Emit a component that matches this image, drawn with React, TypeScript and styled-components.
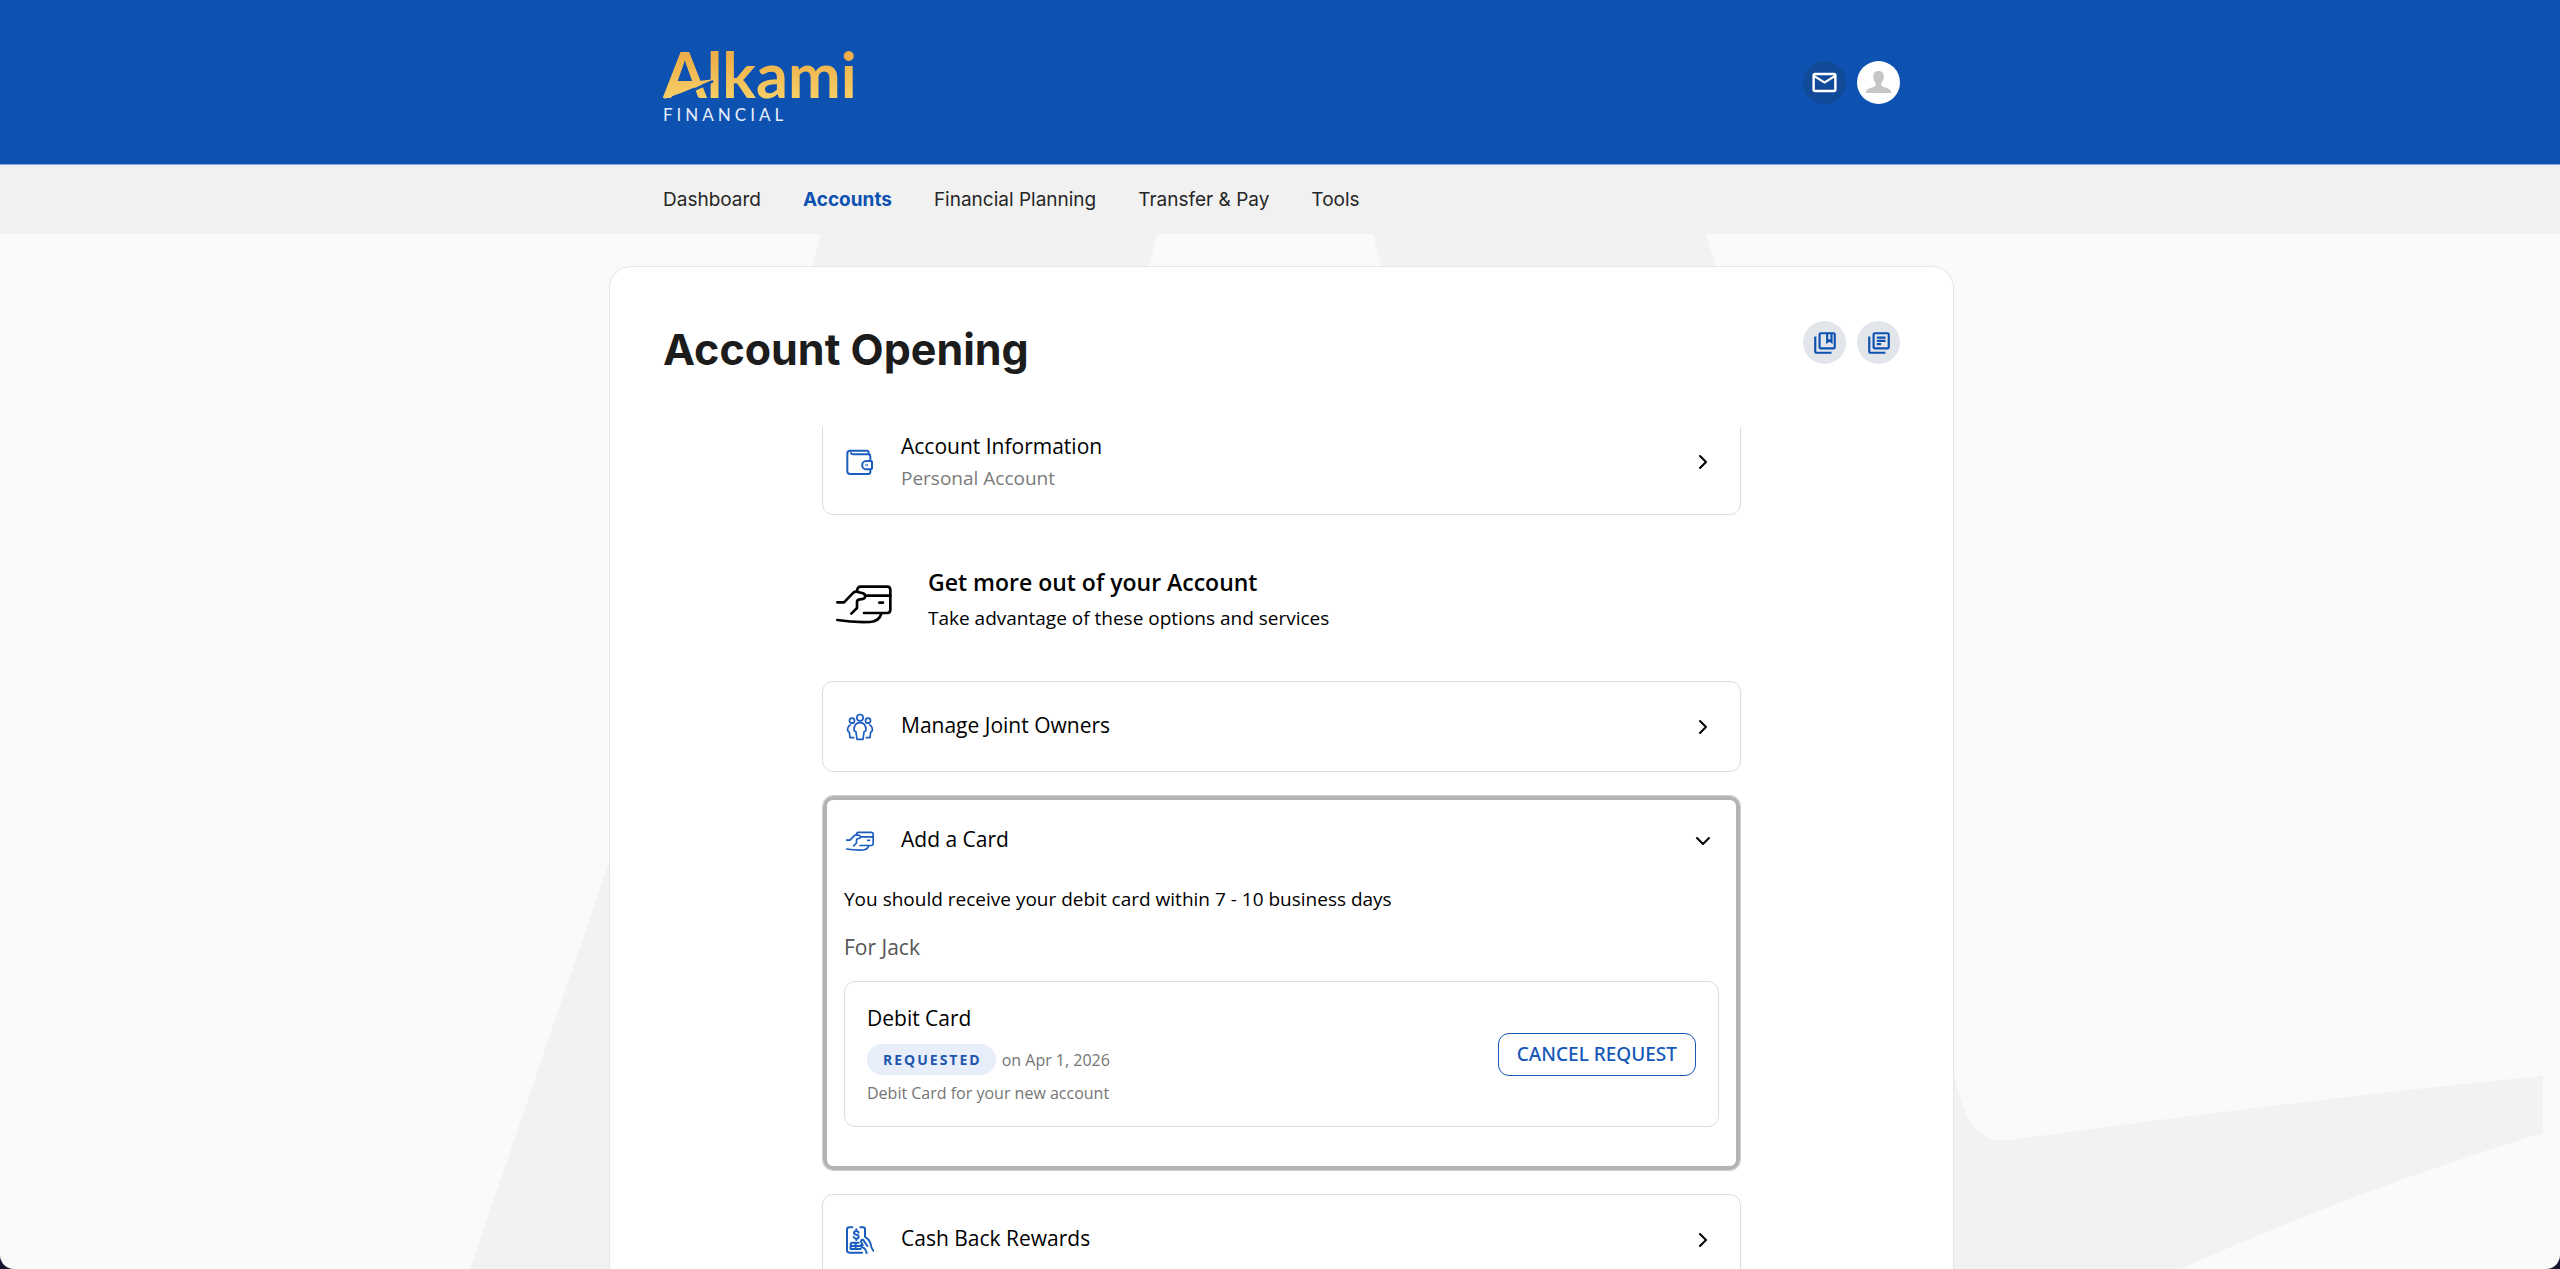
import React from 'react';
import styled, { createGlobalStyle, css } from 'styled-components';
import { MdMailOutline, MdOutlineCollectionsBookmark, MdOutlineLibraryBooks } from 'react-icons/md';
import { FiChevronDown, FiChevronRight } from 'react-icons/fi';

const blue = '#0d52b1';
const bodyFont = "'Open Sans', 'Noto Sans', sans-serif";
const uiFont = "Inter, 'Liberation Sans', sans-serif";

const GlobalStyle = createGlobalStyle`
  *, *::before, *::after { box-sizing: border-box; }
  html { background: #1a1433; }
  body { margin: 0; font-family: ${bodyFont}; color: #000; }
  h1, h2, h3, p { margin: 0; }
  button { font: inherit; color: inherit; cursor: pointer; }
`;

const Page = styled.div`
  position: relative;
  display: flex;
  flex-direction: column;
  height: 100vh;
  overflow: hidden;
  background: #fafafa;
  border-radius: 0 0 14px 14px;
`;

const TopBar = styled.header`
  flex: none;
  padding-left: 3px;
  background: ${blue};
  border-bottom: 1px solid #86a8d8;
`;

const Container = styled.div`
  display: flex;
  align-items: center;
  width: 100%;
  max-width: 1345px;
  margin: 0 auto;
  padding: 0 54px;
`;

const TopBarInner = styled(Container)`
  justify-content: space-between;
  height: 164px;
`;

const LogoLink = styled.a`
  display: block;
  line-height: 0;
`;

const Actions = styled.div`
  display: flex;
  gap: 11px;
`;

const RoundButton = styled.button<{ $bg: string; $fg: string }>`
  display: flex;
  align-items: center;
  justify-content: center;
  width: 43px;
  height: 43px;
  padding: 0;
  border: 0;
  border-radius: 50%;
  background: ${(p) => p.$bg};
  color: ${(p) => p.$fg};
`;

const NavBar = styled.nav`
  position: relative;
  flex: none;
  padding-left: 3px;
  background: #f1f1f1;
`;

const NavInner = styled(Container)`
  gap: 42px;
  height: 69px;
`;

const NavLink = styled.a<{ $active?: boolean }>`
  font: 400 19px/28px ${uiFont};
  color: #262626;
  text-decoration: none;
  ${(p) =>
    p.$active &&
    css`
      font-weight: 700;
      color: ${blue};
    `}
`;

const Main = styled.main`
  position: relative;
  display: flex;
  flex: 1;
  min-height: 0;
  padding: 32px 0 0 3px;
`;

const Watermark = styled.svg`
  position: absolute;
  inset: 0;
  width: 100%;
  height: 100%;
`;

const Sheet = styled.section`
  position: relative;
  display: flex;
  flex-direction: column;
  width: 100%;
  max-width: 1345px;
  margin: 0 auto;
  padding: 54px 53px 0;
  background: #fff;
  border: 1px solid #e6e6e6;
  border-bottom: 0;
  border-radius: 22px 22px 0 0;
`;

const SheetHead = styled.div`
  display: flex;
  align-items: flex-start;
  justify-content: space-between;
  margin-bottom: 50px;
`;

const PageTitle = styled.h1`
  font: 700 43px/56px ${uiFont};
  color: #1c1c1c;
`;

const ScrollArea = styled.div`
  flex: 1;
  min-height: 0;
  overflow-y: auto;
  scrollbar-width: none;
`;

const List = styled.div`
  display: flex;
  flex-direction: column;
  max-width: 919px;
  margin: -18px auto 0;
`;

const Panel = styled.section<{ $focused?: boolean }>`
  border: 1px solid #dcdde3;
  border-radius: 11px;
  & + & {
    margin-top: 23px;
  }
  ${(p) =>
    p.$focused &&
    css`
      border-color: #cfcfcf;
      box-shadow: inset 0 0 0 4px #b3b3b3;
    `}
`;

const PanelHead = styled.button`
  display: flex;
  align-items: center;
  width: 100%;
  min-height: 89px;
  padding: 20px 25px 20px 23px;
  border: 0;
  background: none;
  text-align: left;
`;

const IconSlot = styled.span`
  display: flex;
  flex: none;
  align-items: center;
  justify-content: center;
  width: 28px;
  height: 28px;
  margin-right: 27px;
  color: #1a5dbf;
`;

const PanelText = styled.span<{ $single: boolean }>`
  display: flex;
  flex: 1;
  flex-direction: column;
  padding-bottom: ${(p) => (p.$single ? 4 : 0)}px;
  line-height: 32px;
`;

const PanelTitle = styled.span`
  font-size: 21px;
`;

const PanelSub = styled.span`
  font-size: 19px;
  color: #7b7b7b;
`;

const PanelBody = styled.div`
  display: flex;
  flex-direction: column;
  gap: 20px;
  padding: 0 21px 43px;
`;

const Promo = styled.div`
  display: flex;
  align-items: center;
  gap: 36px;
  padding: 51px 14px 39px;
`;

const PromoText = styled.div`
  display: flex;
  flex-direction: column;
  gap: 6px;
  padding-bottom: 10px;
`;

const PromoTitle = styled.h2`
  font-size: 23px;
  font-weight: 600;
  line-height: 32px;
`;

const BodyText = styled.p`
  font-size: 19px;
  line-height: 28px;
`;

const OwnerName = styled.h3`
  font-size: 21px;
  font-weight: 400;
  line-height: 28px;
  color: #555;
`;

const CardRequest = styled.div`
  display: flex;
  align-items: center;
  justify-content: space-between;
  padding: 21px 22px;
  border: 1px solid #dcdde3;
  border-radius: 11px;
`;

const CardTitle = styled.h3`
  font-size: 21px;
  font-weight: 400;
  line-height: 30px;
`;

const StatusLine = styled.p`
  display: flex;
  align-items: center;
  gap: 6px;
  margin: 11px 0 6px;
  font-size: 16px;
  line-height: 24px;
  color: #757575;
`;

const Badge = styled.span`
  padding: 0 14px 0 16px;
  border-radius: 16px;
  background: #e8eefa;
  font-size: 14px;
  font-weight: 700;
  line-height: 31px;
  letter-spacing: 2px;
  color: #2056ab;
`;

const CardNote = styled.p`
  font-size: 16px;
  line-height: 24px;
  color: #757575;
`;

const CancelButton = styled.button`
  height: 43px;
  padding: 0 18px;
  border: 1px solid #1558b8;
  border-radius: 11px;
  background: #fff;
  font-family: 'Noto Sans', 'Open Sans', sans-serif;
  font-size: 19px;
  font-weight: 500;
  color: #1558b8;
`;

const Logo = () => (
  <svg width="194" height="88" viewBox="0 0 194 88" role="img" aria-label="Alkami Financial">
    <defs>
      <linearGradient id="gold" gradientUnits="userSpaceOnUse" x1="0" y1="18" x2="0" y2="60">
        <stop offset="0" stopColor="#eeae49" />
        <stop offset="1" stopColor="#f7cf66" />
      </linearGradient>
    </defs>
    <text x="0" y="60" fill="url(#gold)" fontFamily="Lato, sans-serif" fontWeight="700" fontSize="63">
      Alkami
    </text>
    <path d="M50 43L20 57" stroke={blue} strokeWidth="3" />
    <path d="M1 61L12 46L52 41L18 55Z" fill="url(#gold)" />
    <text x="0" y="83" fill="#e6eefa" fontFamily="Lato, sans-serif" fontSize="17" letterSpacing="4">
      FINANCIAL
    </text>
  </svg>
);

const Avatar = () => (
  <svg width="27" height="24" viewBox="0 0 27 24" fill="#c6c6c6" aria-hidden="true">
    <path d="M13.500 1C17 1 19 3.200 18.800 7C18.600 10 17.400 12 16.200 13.600C15.800 15.200 16.600 16.300 18.600 17C23 18.400 26 19 26.200 23H.8C1 19 4 18.400 8.400 17C10.400 16.300 11.200 15.200 10.800 13.600C9.600 12 8.400 10 8.200 7C8 3.200 10 1 13.500 1Z" />
  </svg>
);

const HandCardIcon = ({ width, stroke }: { width: number; stroke: number }) => (
  <svg
    width={width}
    viewBox="48 72 168 120"
    fill="none"
    stroke="currentColor"
    strokeWidth={stroke}
    strokeLinecap="round"
    strokeLinejoin="round"
    aria-hidden="true"
  >
    <path d="M52 127H72L101 97Q105 94 110 95L129 100Q138 104 135 112Q132 118 119 118Q111 119 111 126V144L94 161" />
    <path d="M111 94Q112 80 122 80H202Q211 80 211 90V149Q211 158 202 159H132" />
    <path d="M136 107H211M178 128H189" />
    <path d="M52 180Q100 188 150 186Q178 184 184 161" />
  </svg>
);

const WalletIcon = () => (
  <svg width="28" height="28" viewBox="30 24 84 84" fill="none" stroke="currentColor" strokeWidth="6" strokeLinecap="round" strokeLinejoin="round" aria-hidden="true">
    <path d="M103 92V96Q103 102 96 102H42Q34 102 34 94V40Q34 32 42 32H92Q98 32 98 38V42Q103 44 103 50V60" />
    <path d="M98 43H52Q46 43 45 39" />
    <path d="M103 63H91A12 12 0 0 0 91 88H103Q108 88 108 84V67Q108 63 103 63Z" />
    <circle cx="92" cy="75" r="1" />
  </svg>
);

const PeopleIcon = () => (
  <svg width="28" height="28" viewBox="48 69 84 84" fill="none" stroke="currentColor" strokeWidth="5" strokeLinecap="round" strokeLinejoin="round" aria-hidden="true">
    <circle cx="90" cy="83" r="9.500" />
    <circle cx="66" cy="92" r="7.500" />
    <circle cx="114" cy="92" r="7.500" />
    <path d="M81 148H99L102 126L108 121Q108 98 90 98Q72 98 72 121L78 126Z" />
    <path d="M61 105Q52 109 53 122L58 127L60 143H71" />
    <path d="M119 105Q128 109 127 122L122 127L120 143H109" />
  </svg>
);

const CashBackIcon = () => (
  <svg width="28" height="28" viewBox="30 34 84 84" fill="none" stroke="currentColor" strokeWidth="6" strokeLinecap="round" strokeLinejoin="round" aria-hidden="true">
    <path d="M49 38H40Q33 38 33 45V107Q33 114 40 114H78" />
    <path d="M73 38H81Q87 38 87 44V66" />
    <path d="M68 54Q66 49 61 49Q54 49 54 55Q54 59 61 60Q68 61 68 66Q68 72 61 72Q55 72 53 67M61 44V49M61 72V76" />
    <path d="M68 84H49Q44 84 44 89V103H74M44 94H72M59 84V103" />
    <path d="M89 68Q99 73 103 85Q104 97 112 108" />
    <path d="M94 94L82 76Q76 73 75 80L80 92Q74 90 73 94Q76 98 84 100Q90 104 92 115" />
  </svg>
);

const navItems = ['Dashboard', 'Accounts', 'Financial Planning', 'Transfer & Pay', 'Tools'];

type AccordionProps = {
  icon: React.ReactNode;
  title: string;
  sub?: string;
  open?: boolean;
  children?: React.ReactNode;
};

const Accordion = ({ icon, title, sub, open, children }: AccordionProps) => (
  <Panel $focused={open}>
    <PanelHead type="button" aria-expanded={!!open}>
      <IconSlot>{icon}</IconSlot>
      <PanelText $single={!sub}>
        <PanelTitle>{title}</PanelTitle>
        {sub && <PanelSub>{sub}</PanelSub>}
      </PanelText>
      {open ? <FiChevronDown size={24} /> : <FiChevronRight size={24} />}
    </PanelHead>
    {open && <PanelBody>{children}</PanelBody>}
  </Panel>
);

export default function App() {
  return (
    <>
      <GlobalStyle />
      <Page>
        <TopBar>
          <TopBarInner>
            <LogoLink href="#">
              <Logo />
            </LogoLink>
            <Actions>
              <RoundButton type="button" aria-label="Messages" $bg="#114a98" $fg="#fff">
                <MdMailOutline size={29} />
              </RoundButton>
              <RoundButton type="button" aria-label="Profile" $bg="#fff" $fg="#c6c6c6">
                <Avatar />
              </RoundButton>
            </Actions>
          </TopBarInner>
        </TopBar>
        <NavBar aria-label="Main">
          <NavInner>
            {navItems.map((item) => (
              <NavLink key={item} href="#" $active={item === 'Accounts'}>
                {item}
              </NavLink>
            ))}
          </NavInner>
        </NavBar>
        <Main>
          <Watermark viewBox="0 234 2560 1035" preserveAspectRatio="xMidYMin slice" aria-hidden="true">
            <path
              fill="#f2f2f2"
              fillRule="evenodd"
              d="M821 234L812 268L470 1269H2180Q2370 1185 2543 1133V1076Q2300 1100 2010 1140Q1982 1143 1968 1118Q1962 1106 1955 1078L1706 234ZM1157 234H1373L1382 270H1148Z"
            />
          </Watermark>
          <Sheet>
            <SheetHead>
              <PageTitle>Account Opening</PageTitle>
              <Actions>
                <RoundButton type="button" aria-label="Saved" $bg="#e2e6ea" $fg={blue}>
                  <MdOutlineCollectionsBookmark size={26} />
                </RoundButton>
                <RoundButton type="button" aria-label="Documents" $bg="#e2e6ea" $fg={blue}>
                  <MdOutlineLibraryBooks size={26} />
                </RoundButton>
              </Actions>
            </SheetHead>
            <ScrollArea>
              <List>
                <Accordion icon={<WalletIcon />} title="Account Information" sub="Personal Account" />
                <Promo>
                  <HandCardIcon width={56} stroke={8} />
                  <PromoText>
                    <PromoTitle>Get more out of your Account</PromoTitle>
                    <BodyText>Take advantage of these options and services</BodyText>
                  </PromoText>
                </Promo>
                <Accordion icon={<PeopleIcon />} title="Manage Joint Owners" />
                <Accordion icon={<HandCardIcon width={28} stroke={10} />} title="Add a Card" open>
                  <BodyText>You should receive your debit card within 7 - 10 business days</BodyText>
                  <OwnerName>For Jack</OwnerName>
                  <CardRequest>
                    <div>
                      <CardTitle>Debit Card</CardTitle>
                      <StatusLine>
                        <Badge>REQUESTED</Badge>
                        on Apr 1, 2026
                      </StatusLine>
                      <CardNote>Debit Card for your new account</CardNote>
                    </div>
                    <CancelButton type="button">CANCEL REQUEST</CancelButton>
                  </CardRequest>
                </Accordion>
                <Accordion icon={<CashBackIcon />} title="Cash Back Rewards" />
              </List>
            </ScrollArea>
          </Sheet>
        </Main>
      </Page>
    </>
  );
}
